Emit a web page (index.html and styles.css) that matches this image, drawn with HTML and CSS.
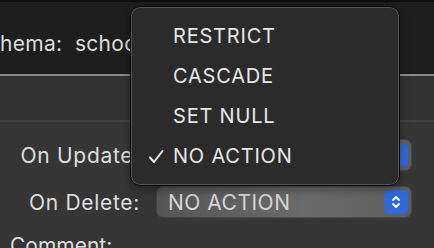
FILE: index.html
```html
<!DOCTYPE html>
<html>
<head>
<meta charset="utf-8">
<link rel="stylesheet" href="styles.css">
</head>
<body>
<div class="screen">
  <div class="top">
    <span class="schema">Schema:&nbsp; school_db</span>
  </div>
  <div class="toolbar"></div>
  <div class="form">
    <div class="row">
      <span class="label">On Update:</span>
      <div class="select">
        <span class="value">NO ACTION</span>
        <span class="stepper">
          <svg width="10" height="16" viewBox="0 0 10 16"><path d="M2 6 L5 3 L8 6 M2 10 L5 13 L8 10" fill="none" stroke="#fff" stroke-width="1.8" stroke-linecap="round" stroke-linejoin="round"/></svg>
        </span>
      </div>
    </div>
    <div class="row">
      <span class="label">On Delete:</span>
      <div class="select">
        <span class="value">NO ACTION</span>
        <span class="stepper">
          <svg width="10" height="16" viewBox="0 0 10 16"><path d="M2 6 L5 3 L8 6 M2 10 L5 13 L8 10" fill="none" stroke="#fff" stroke-width="1.8" stroke-linecap="round" stroke-linejoin="round"/></svg>
        </span>
      </div>
    </div>
    <div class="comment">Comment:</div>
  </div>
  <div class="menu">
    <div class="item">RESTRICT</div>
    <div class="item">CASCADE</div>
    <div class="item">SET NULL</div>
    <div class="item checked">
      <svg class="check" width="16" height="16" viewBox="0 0 16 16"><path d="M2 8.5 L6 13 L14.5 2" fill="none" stroke="#e8e8e8" stroke-width="2" stroke-linecap="round" stroke-linejoin="round"/></svg>
      NO ACTION
    </div>
  </div>
</div>
</body>
</html>
```
FILE: styles.css
```css
html, body {
  margin: 0;
  padding: 0;
}
body {
  background: #333333;
  font-family: Inter, "Liberation Sans", sans-serif;
  overflow: hidden;
}
.screen {
  position: relative;
  width: 434px;
  height: 248px;
  overflow: hidden;
  background: #333333;
}
.top {
  height: 72px;
  background: #1e1e1e;
  border-top: 2px solid #0e0e0e;
  display: flex;
  align-items: flex-end;
}
.schema {
  font-size: 21px;
  color: #dcdcdc;
  margin-left: -26px;
  margin-bottom: 18px;
  white-space: nowrap;
  letter-spacing: 0.3px;
}
.toolbar {
  height: 44px;
  border-top: 2px solid #8a8a8a;
  border-bottom: 2px solid #444444;
  background: #323232;
}
.form {
  background: #363636;
  height: 126px;
  padding-top: 17px;
  box-sizing: border-box;
}
.row {
  display: flex;
  align-items: center;
  height: 32px;
  margin-bottom: 15px;
}
.label {
  width: 140px;
  text-align: right;
  font-size: 21px;
  color: #dedede;
  letter-spacing: 0.7px;
}
.select {
  margin-left: 16px;
  width: 256px;
  height: 32px;
  box-sizing: border-box;
  border-radius: 7px;
  background: linear-gradient(90deg, #555555 0%, #6b6b6b 60%, #5e5e5e 100%);
  box-shadow: inset 0 0 0 1px rgba(0,0,0,0.25);
  display: flex;
  align-items: center;
  justify-content: space-between;
  padding: 0 4px 0 12px;
}
.value {
  font-size: 21px;
  color: #d6d6d6;
  letter-spacing: 0.5px;
}
.stepper {
  width: 24px;
  height: 24px;
  border-radius: 5px;
  background: #2f6bd6;
  display: flex;
  align-items: center;
  justify-content: center;
}
.comment {
  margin-left: 10px;
  font-size: 21px;
  color: #dedede;
  margin-top: 0;
}
.menu {
  position: absolute;
  left: 130px;
  top: 6px;
  width: 270px;
  height: 180px;
  box-sizing: border-box;
  background: #2b2b2c;
  border: 1px solid #0a0a0a;
  border-radius: 10px;
  box-shadow: inset 0 0 0 1px #555555, 0 4px 10px rgba(0,0,0,0.35);
  padding-top: 9px;
}
.item {
  height: 40px;
  display: flex;
  align-items: center;
  padding-left: 42px;
  font-size: 20px;
  color: #e8e8e8;
  letter-spacing: 0.8px;
  position: relative;
}
.check {
  position: absolute;
  left: 17px;
  top: 13px;
}
```
